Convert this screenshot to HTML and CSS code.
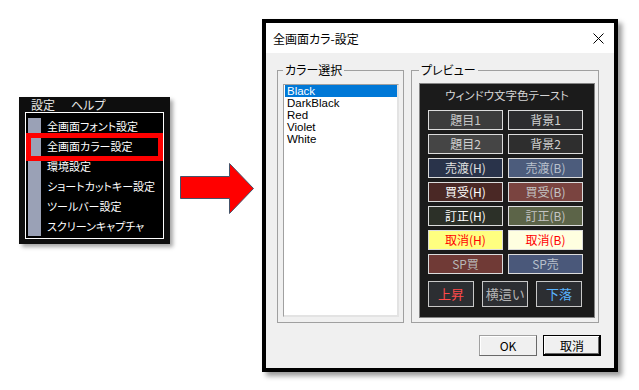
FILE: index.html
```html
<!DOCTYPE html>
<html lang="ja">
<head>
<meta charset="utf-8">
<title>全画面カラー設定</title>
<link rel="stylesheet" href="styles.css">
</head>
<body>
<div class="stage">
  <div class="menu">
    <div class="menubar"><span>設定</span><span>ヘルプ</span></div>
    <div class="popup">
      <div class="strip"></div>
      <ul class="items">
        <li>全画面フォント設定</li>
        <li>全画面カラー設定</li>
        <li>環境設定</li>
        <li>ショートカットキー設定</li>
        <li>ツールバー設定</li>
        <li>スクリーンキャプチャ</li>
      </ul>
    </div>
    <div class="highlight"></div>
  </div>

  <svg class="arrow" width="76" height="53" viewBox="0 0 76 53">
    <polygon points="1.5,14.5 50.5,14.5 50.5,1.5 74.5,26.5 50.5,51.5 50.5,36.5 1.5,36.5" fill="#ff0000" stroke="#44546a" stroke-width="1"/>
  </svg>

  <div class="dialog">
    <div class="titlebar">
      <span class="title">全画面カラ-設定</span>
      <svg class="close" width="11" height="11" viewBox="0 0 11 11"><path d="M0.5 0.5 L10.5 10.5 M10.5 0.5 L0.5 10.5" stroke="#000" stroke-width="1" fill="none"/></svg>
    </div>
    <div class="content">
      <div class="groups">
        <fieldset class="group group-list">
          <legend>カラー選択</legend>
          <ul class="listbox">
            <li class="sel">Black</li>
            <li>DarkBlack</li>
            <li>Red</li>
            <li>Violet</li>
            <li>White</li>
          </ul>
        </fieldset>
        <fieldset class="group group-preview">
          <legend>プレビュー</legend>
          <div class="preview">
            <div class="ptitle">ウィンドウ文字色テースト</div>
            <div class="swatches">
              <div class="sw title1">題目1</div>
              <div class="sw back1">背景1</div>
              <div class="sw title2">題目2</div>
              <div class="sw back2">背景2</div>
              <div class="sw sellh">売渡(H)</div>
              <div class="sw sellb">売渡(B)</div>
              <div class="sw buyh">買受(H)</div>
              <div class="sw buyb">買受(B)</div>
              <div class="sw fixh">訂正(H)</div>
              <div class="sw fixb">訂正(B)</div>
              <div class="sw cancelh">取消(H)</div>
              <div class="sw cancelb">取消(B)</div>
              <div class="sw spbuy">SP買</div>
              <div class="sw spsell">SP売</div>
            </div>
            <div class="trend">
              <div class="tb up">上昇</div>
              <div class="tb flat">横這い</div>
              <div class="tb down">下落</div>
            </div>
          </div>
        </fieldset>
      </div>
      <div class="actions">
        <button class="btn">OK</button>
        <button class="btn default">取消</button>
      </div>
    </div>
  </div>
</div>
</body>
</html>
```

FILE: styles.css
```css
* { box-sizing: border-box; }

body {
  margin: 0;
  width: 639px;
  height: 390px;
  overflow: hidden;
  background: #fff;
  font-family: "Noto Sans CJK JP", "Liberation Sans", sans-serif;
  font-size: 12px;
  font-feature-settings: "palt";
}

.stage {
  display: flex;
  align-items: flex-start;
  padding: 19px 0 0 19px;
}

/* ---------- menu ---------- */
.menu {
  position: relative;
  width: 151px;
  height: 147px;
  margin-top: 78px;
  padding-left: 6px;
  background: #0e0e0e;
  box-shadow: 3px 3px 4px rgba(0, 0, 0, 0.35);
}

.menubar {
  display: flex;
  gap: 16px;
  height: 15px;
  padding-left: 6px;
  line-height: 15px;
  color: #e8e8e8;
}

.popup {
  display: flex;
  width: 139px;
  height: 127px;
  border: 1px solid #fff;
  background: #000;
  overflow: hidden;
}

.strip {
  flex: 0 0 13px;
  width: 13px;
  margin: 5px 0 2px 2px;
  background: #9aa1b6;
}

.items {
  list-style: none;
  margin: 0;
  padding: 3px 0 0 6px;
  color: #fff;
  font-size: 11px;
}

.items li {
  line-height: 20px;
  height: 20px;
  white-space: nowrap;
}

.highlight {
  position: absolute;
  left: 7px;
  top: 36px;
  width: 137px;
  height: 28px;
  border: 5px solid #ff0000;
}

/* ---------- arrow ---------- */
.arrow {
  display: block;
  margin: 143px 0 0 9px;
}

/* ---------- dialog ---------- */
.dialog {
  display: flex;
  flex-direction: column;
  width: 356px;
  height: 353px;
  margin-left: 7px;
  border: 4px solid #000;
  background: #f0f0f0;
  box-shadow: 4px 4px 5px rgba(0, 0, 0, 0.4);
}

.titlebar {
  display: flex;
  align-items: center;
  justify-content: space-between;
  height: 30px;
  padding: 0 10px 0 7px;
  background: #fff;
  color: #000;
}

.close { display: block; }

.content {
  flex: 1;
  padding: 10px 13px 0 11px;
}

.groups {
  display: flex;
  gap: 7px;
}

.group {
  margin: 0;
  min-width: 0;
  border: 1px solid #a0a0a0;
}

.group legend {
  padding: 0 2px;
  margin: 0;
  line-height: 14px;
  height: 14px;
  color: #000;
}

.group-list {
  width: 127px;
  padding: 7px 4px 5px 5px;
}

.group-preview {
  width: 188px;
  padding: 6px 3px 4px 7px;
}

.listbox {
  list-style: none;
  margin: 0;
  width: 116px;
  height: 233px;
  padding: 0 1px;
  background: #fff;
  border: 1px solid;
  border-color: #a0a0a0 #e3e3e3 #e3e3e3 #a0a0a0;
  box-shadow: inset -1px -1px 0 #e3e3e3;
  font-family: "Liberation Sans", sans-serif;
  font-size: 11.5px;
}

.listbox li {
  height: 12px;
  line-height: 12px;
  padding-left: 2px;
  color: #000;
}

.listbox li.sel {
  background: #0078d7;
  color: #fff;
}

/* ---------- preview ---------- */
.preview {
  width: 176px;
  height: 235px;
  padding-top: 4px;
  background: #1b1b1b;
  border: 1px solid #848484;
}

.ptitle {
  height: 14px;
  line-height: 14px;
  text-align: center;
  font-size: 11.5px;
  color: #d6d6d6;
}

.swatches {
  display: grid;
  grid-template-columns: 75px 75px;
  grid-auto-rows: 20px;
  column-gap: 5px;
  row-gap: 4px;
  margin: 8px 0 0 8px;
}

.sw {
  border: 1px solid #dcdcdc;
  line-height: 18px;
  text-align: center;
  font-size: 12px;
}

.title1 { background: #3c3c3c; color: #c8c8c8; }
.back1 { background: #2d2d2f; color: #d0d0d0; }
.title2 { background: #454545; color: #d0d0d0; }
.back2 { background: #2e2e2e; color: #d0d0d0; }
.sellh { background: #29334a; color: #e0e0e0; }
.sellb { background: #4c5c7c; color: #b8c0cc; }
.buyh { background: #4a2825; color: #ffffff; }
.buyb { background: #7a4440; color: #c4c4c4; }
.fixh { background: #2c3028; color: #ffffff; }
.fixb { background: #5c6448; color: #c4c4c4; }
.cancelh { background: #ffff80; color: #ff0000; }
.cancelb { background: #ffffe0; color: #ff0000; }
.spbuy { background: #703a36; color: #b8b8b8; }
.spsell { background: #4a587a; color: #b8c0cc; }

.trend {
  display: flex;
  gap: 8px;
  margin: 7px 0 0 8px;
}

.tb {
  width: 46px;
  height: 26px;
  line-height: 24px;
  border: 1px solid #c8c8c8;
  background: #2c2e32;
  text-align: center;
  font-size: 13px;
}

.up { color: #ff4a4a; }
.flat { color: #b4b4b4; }
.down { color: #5ab4ff; }

/* ---------- buttons ---------- */
.actions {
  display: flex;
  justify-content: flex-end;
  gap: 6px;
  margin-top: 12px;
}

.btn {
  width: 58px;
  height: 21px;
  padding: 0;
  font-family: "Noto Sans CJK JP", "Liberation Sans", sans-serif;
  font-size: 12px;
  line-height: 18px;
  color: #000;
  background: #f0f0f0;
  border: 1px solid;
  border-color: #a0a0a0 #696969 #696969 #a0a0a0;
  box-shadow: inset 1px 1px 0 #fff;
}

.btn.default {
  border-color: #000;
  box-shadow: inset -1px -1px 0 #000, inset 1px 1px 0 #fff, inset -2px -2px 0 #696969;
}
```
